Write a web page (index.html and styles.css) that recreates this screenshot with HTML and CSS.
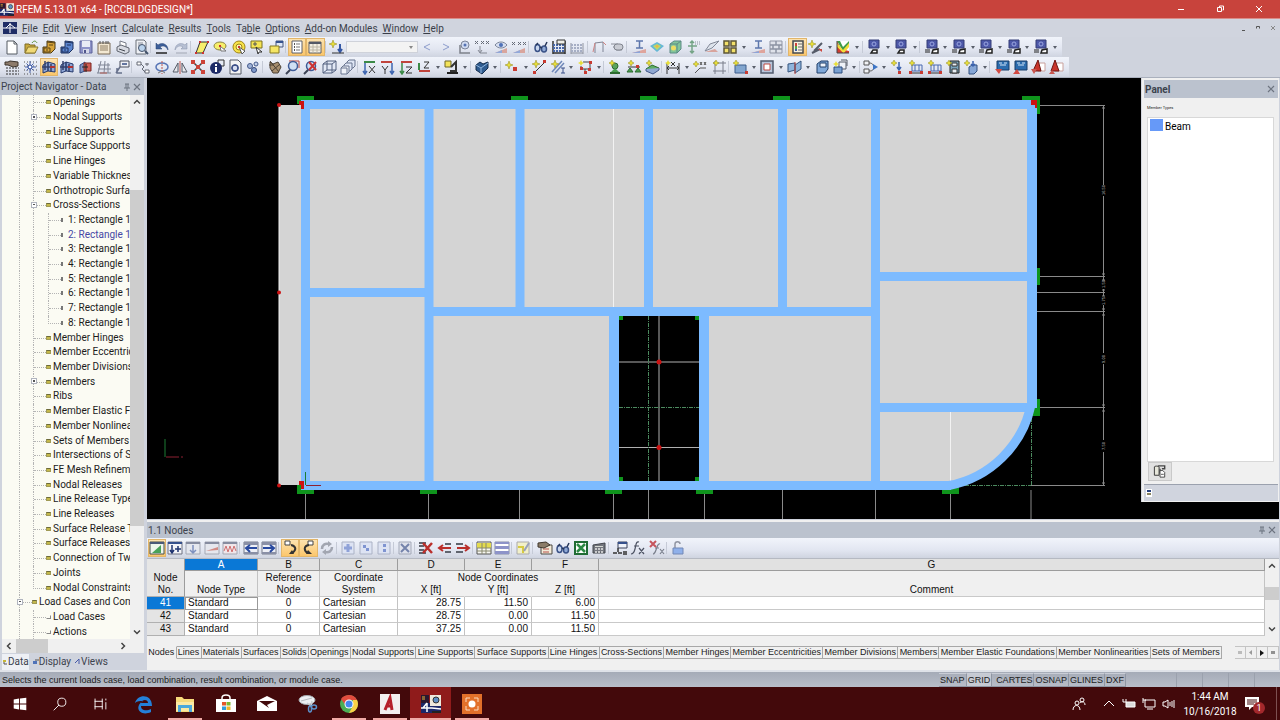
FILE: index.html
```html
<!DOCTYPE html>
<html lang="en">
<head>
    <meta charset="UTF-8">
    <meta name="viewport" content="width=device-width, initial-scale=1.0">
    <title>RFEM 5.13.01 x64 - [RCCBLDGDESIGN*]</title>
    <link rel="stylesheet" href="styles.css">
</head>
<body>
    <!-- icon sprite -->
    <svg class="sprite" aria-hidden="true">
        <defs>
            <symbol id="new" viewBox="0 0 16 16"><path d="M3 2h7l3 3v10H3z" fill="#fff" stroke="#555a63"/><path d="M10 2v3h3" fill="none" stroke="#555a63"/></symbol>
            <symbol id="open" viewBox="0 0 16 16"><path d="M2 5h4l1 1h5v8H2z" fill="#c9a93c" stroke="#7d6a24"/><path d="M2 14l3-6h10l-3 6z" fill="#f0d976" stroke="#8b7830"/><path d="M9 4c2-3 4-2 5 0" fill="none" stroke="#5b8f38"/></symbol>
            <symbol id="cab-y" viewBox="0 0 16 16"><path d="M6 2l8 1v7l-4 4H2V8h4z" fill="#d9a53a" stroke="#4b3a17"/><path d="M6 3l8 1M3 9h6v4H3zM5 11h2M8 6h4" fill="none" stroke="#5b4415"/></symbol>
            <symbol id="cab-b" viewBox="0 0 16 16"><path d="M6 2l8 1v7l-4 4H2V8h4z" fill="#5c86d0" stroke="#1d315f"/><path d="M6 3l8 1M3 9h6v4H3zM5 11h2M8 6h4" fill="none" stroke="#1d315f"/></symbol>
            <symbol id="save" viewBox="0 0 16 16"><path d="M2 2h12v12H2z" fill="#8e93c8" stroke="#5d629a"/><path d="M4 2h8v6H4z" fill="#e9ebf5"/><path d="M5 10h6v4H5z" fill="#d5d8e8"/><path d="M6 11h2v3H6z" fill="#50568c"/></symbol>
            <symbol id="report" viewBox="0 0 16 16"><path d="M2 4h12v11H2z" fill="#f3e8d2" stroke="#7a6a55"/><path d="M4 7h8M4 9h8M4 11h8" stroke="#8d7c63"/><path d="M4 2v3M7 2v3M10 2v3M12 2v3" stroke="#555"/></symbol>
            <symbol id="print" viewBox="0 0 16 16"><path d="M5 2l6 2v5H5z" fill="#fff" stroke="#777c88"/><path d="M2 8l4-2 8 3v4l-4 2-8-3z" fill="#d7dae2" stroke="#60656f"/><path d="M4 10l6 2" stroke="#3f434c"/></symbol>
            <symbol id="preview" viewBox="0 0 16 16"><path d="M3 1h8l2 2v12H3z" fill="#eef0f5" stroke="#6b7078"/><path d="M5 4h5M5 6h4M5 8h3" stroke="#8a8f9a"/><circle cx="9" cy="9" r="3.5" fill="#b9d2ec" stroke="#43526b"/><path d="M12 12l3 3" stroke="#43526b" stroke-width="2"/></symbol>
            <symbol id="undo" viewBox="0 0 16 16"><path d="M2 4v6h6L6 8c3-2 6-1 8 3 0-6-6-8-10-5z" fill="#3d5f9b" stroke="#27406f" stroke-width=".5"/><path d="M2 14h11" stroke="#222" stroke-width="1.5"/></symbol>
            <symbol id="redo" viewBox="0 0 16 16"><path d="M14 4v6H8l2-2c-3-2-6-1-8 3 0-6 6-8 10-5z" fill="#b7c0d4" stroke="#8690a8" stroke-width=".5"/><path d="M3 14h11" stroke="#a2a7b4"/></symbol>
            <symbol id="poly" viewBox="0 0 16 16"><path d="M2 14L6 3h8L9 14z" fill="#f7ee6a" stroke="#333"/><path d="M5 2h2v2H5zM13 2h2v2h-2zM1 13h2v2H1zM8 13h2v2H8z" fill="#c33"/></symbol>
            <symbol id="ell" viewBox="0 0 16 16"><ellipse cx="8" cy="7" rx="6" ry="4" fill="#f7ee6a" stroke="#888243"/><path d="M8 7l6 5H9z" fill="#fff" stroke="#777"/><path d="M7 6h2v2H7z" fill="#c33"/></symbol>
            <symbol id="circ" viewBox="0 0 16 16"><circle cx="8" cy="8" r="6" fill="#f7e34a" stroke="#a08414"/><circle cx="8" cy="8" r="3" fill="#fff7b0" stroke="#a08414"/><path d="M8 8l6 4-3 3z" fill="#fff" stroke="#555"/><path d="M7 7h2v2H7z" fill="#c33"/></symbol>
            <symbol id="note" viewBox="0 0 16 16"><path d="M2 2h11v7H2z" fill="#f5e454" stroke="#7a7023"/><path d="M4 5h4M6 3v4" stroke="#555"/><path d="M7 8l6 5-3 0-1 2z" fill="#fff" stroke="#333"/></symbol>
            <symbol id="copywin" viewBox="0 0 16 16"><path d="M8 2h7v6H8z" fill="#dfe8f7" stroke="#44557a"/><path d="M8 3h7" stroke="#36528f" stroke-width="2"/><path d="M2 7h9v7H2z" fill="#f5e665" stroke="#857924"/></symbol>
            <symbol id="list" viewBox="0 0 16 16"><path d="M3 2h10v12H3z" fill="#fff" stroke="#5d616b"/><path d="M5 5h1M5 8h1M5 11h1" stroke="#222" stroke-width="1.5"/><path d="M7 5h4M7 8h4M7 11h4" stroke="#777"/></symbol>
            <symbol id="grid" viewBox="0 0 16 16"><path d="M2 3h12v11H2z" fill="#f4efe2" stroke="#5d616b"/><path d="M2 3h12v2H2z" fill="#555a66"/><path d="M6 5v9M10 5v9M2 8h12M2 11h12" stroke="#bcb6a5"/></symbol>
            <symbol id="star-load" viewBox="0 0 16 16"><path d="M4 1l1 3 3 1-3 1-1 3-1-3-3-1 3-1z" fill="#e8df38" stroke="#908618" stroke-width=".5"/><path d="M11 5v7M9 10l2 3 2-3" fill="none" stroke="#3558a5" stroke-width="2"/><path d="M3 14h12" stroke="#333"/></symbol>
            <symbol id="lt" viewBox="0 0 16 16"><path d="M11 5L5 8l6 3" fill="none" stroke="#8d9dcc"/></symbol>
            <symbol id="gt" viewBox="0 0 16 16"><path d="M5 5l6 3-6 3" fill="none" stroke="#8d9dcc"/></symbol>
            <symbol id="eye-load" viewBox="0 0 16 16"><circle cx="9" cy="6" r="4" fill="#cfdaf0" stroke="#7c8599"/><circle cx="9" cy="6" r="1.5" fill="#5673b3"/><path d="M4 6v8h10" fill="none" stroke="#7d818b" stroke-width="1.5"/></symbol>
            <symbol id="val-load" viewBox="0 0 16 16"><path d="M1 2l3 3M4 2L1 5M7 2l3 3M10 2L7 5M12 2l3 3M15 2l-3 3" stroke="#666b77"/><path d="M6 7v6M4 11l2 3 2-3M6 14h7" fill="none" stroke="#858994"/></symbol>
            <symbol id="eye-res" viewBox="0 0 16 16"><path d="M2 6c3-4 9-4 12 0-3 4-9 4-12 0z" fill="#d6def0" stroke="#7c8599"/><circle cx="8" cy="6" r="2" fill="#4d71b8"/><path d="M2 14h12V9z" fill="#d9a59d"/><path d="M2 14h7v-3z" fill="#92a9da"/></symbol>
            <symbol id="val-res" viewBox="0 0 16 16"><path d="M1 3l3 3M4 3L1 6M7 3l3 3M10 3L7 6M12 3l3 3M15 3l-3 3" stroke="#666b77"/><path d="M2 14h12V9z" fill="#d9a59d"/><path d="M2 14h7v-3z" fill="#92a9da"/></symbol>
            <symbol id="glasses" viewBox="0 0 16 16"><ellipse cx="4.500" cy="9" rx="2.500" ry="3.500" fill="#c9d7ef" stroke="#3a5287" stroke-width="1.500"/><ellipse cx="11" cy="10" rx="2.500" ry="3" fill="#8fa9d6" stroke="#3a5287" stroke-width="1.500"/><path d="M7 8l2 1M12 7l2-4M3 6l2-2" stroke="#26365a" stroke-width="1.500"/></symbol>
            <symbol id="abacus" viewBox="0 0 16 16"><path d="M2 2v13M14 2v13M2 14h12" stroke="#333" stroke-width="1.500"/><path d="M2 6h12M2 9h12M2 12h12" stroke="#4767a8" stroke-width="2" stroke-dasharray="2 1"/><path d="M6 1h8v4H6z" fill="#f0efe8" stroke="#333"/></symbol>
            <symbol id="abacus-off" viewBox="0 0 16 16"><path d="M2 4v11M14 4v11M2 14h12" stroke="#9094a0"/><path d="M2 6h12M2 9h12M2 12h12" stroke="#a6aec4" stroke-width="2" stroke-dasharray="2 1"/></symbol>
            <symbol id="frame" viewBox="0 0 16 16"><path d="M4 14V4l8-1v10" fill="none" stroke="#7f8494"/><path d="M4 4L2 13M12 3l3 3" stroke="#d08585"/></symbol>
            <symbol id="mass" viewBox="0 0 16 16"><path d="M2 5h7M4 8h8M7 11h6" stroke="#8b8f99"/><rect x="5" y="5" width="9" height="6" rx="3" fill="#c9ccd4" stroke="#80848e"/></symbol>
            <symbol id="sec-i" viewBox="0 0 16 16"><path d="M5 2h7M8.500 2v7M5 9h7" stroke="#5e77ad" stroke-width="1.500"/><path d="M1 14h14v-4z" fill="#dfa49c"/><path d="M1 14h8v-2z" fill="#8ca5da"/></symbol>
            <symbol id="surf" viewBox="0 0 16 16"><path d="M1 7l7-4 7 4-7 6z" fill="#66b8d5"/><path d="M4 7l4-2 4 2-4 4z" fill="#b9dc69"/><path d="M6 7l2-1 2 1-2 2z" fill="#f0b04a"/></symbol>
            <symbol id="solid" viewBox="0 0 16 16"><path d="M3 5l4-3h7v8l-4 4H3z" fill="#82c59a" stroke="#5c8a86"/><path d="M3 5h7v9M10 5l4-3" fill="none" stroke="#5c8a86"/><circle cx="6.500" cy="9" r="2.500" fill="#eddc62"/></symbol>
            <symbol id="result-node" viewBox="0 0 16 16"><path d="M6 2v12M2 7h9M4 4l2-2 2 2M4 12l2 2 2-2" fill="none" stroke="#74a486" stroke-width="1.500"/><path d="M9 3h6M9 5h6" stroke="#8b91a0" stroke-dasharray="1 1"/></symbol>
            <symbol id="plane" viewBox="0 0 16 16"><path d="M1 12L6 5l9-3-7 7z" fill="#dde3ec" stroke="#838998"/><path d="M1 13h13l-3-3z" fill="#d8a49d"/></symbol>
            <symbol id="four" viewBox="0 0 16 16"><path d="M2 2h5v5H2zM9 2h5v5H9zM2 9h5v5H2zM9 9h5v5H9z" fill="#f3e069" stroke="#5d5636" stroke-width="1.500"/></symbol>
            <symbol id="grid-off" viewBox="0 0 16 16"><path d="M2 2h12v12H2z" fill="#dfe2ea" stroke="#9196a5"/><path d="M2 6h12M2 10h12M8 2v4M5 6v4M11 6v4M8 10v4" stroke="#8c92a3" stroke-width="1.500"/></symbol>
            <symbol id="panel" viewBox="0 0 16 16"><path d="M3 2h10v12H3z" fill="#f8f1de" stroke="#454a50" stroke-width="1.500"/><path d="M5 4h2v3H5z" fill="#cf4339"/><path d="M5 7h2v3H5z" fill="#58a646"/><path d="M5 10h2v2H5z" fill="#3c5fa6"/><path d="M8 5h4M8 8h4M8 11h4" stroke="#666"/></symbol>
            <symbol id="star-dots" viewBox="0 0 16 16"><path d="M4 1l1 3 3 1-3 1-1 3-1-3-3-1 3-1z" fill="#e8df38" stroke="#908618" stroke-width=".5"/><path d="M6 12l8-8M4 14l8-4" stroke="#555b68" stroke-width="2"/><path d="M10 10h4v3z" fill="#ca4a41"/></symbol>
            <symbol id="rainbow" viewBox="0 0 16 16"><path d="M2 2h12v12H2z" fill="#fff"/><path d="M2 2v12h12v-2L6 10z" fill="#d33c31"/><path d="M2 2h3l3 6 6-6v4l-6 6z" fill="#3f9c48"/><path d="M2 4l6 7 6-7v4l-5 6H8L2 8z" fill="#f2db3a"/><path d="M2 8l6 6H2z" fill="#d33c31"/><path d="M2 2v12h12" fill="none" stroke="#444"/></symbol>
            <symbol id="mon" viewBox="0 0 16 16"><path d="M3 1h10v8H3z" fill="#4d58a8" stroke="#353c77"/><circle cx="8" cy="5" r="2" fill="none" stroke="#9aa6e0"/><path d="M5 14h6v-3H7z" fill="#fff" stroke="#222" stroke-width="1.500"/></symbol>
            <symbol id="mon-arr" viewBox="0 0 16 16"><path d="M3 1h10v8H3z" fill="#4d58a8" stroke="#353c77"/><circle cx="8" cy="5" r="2" fill="none" stroke="#9aa6e0"/><path d="M1 11h5M1 13h5" stroke="#222"/><path d="M8 14h6v-4l-5 1z" fill="#fff" stroke="#222" stroke-width="1.500"/></symbol>
            <symbol id="hand-grid" viewBox="0 0 16 16"><path d="M2 9h13M2 12h13M2 15h13" stroke="#333" stroke-dasharray="2 1"/><path d="M1 3h3l2-1 8 1v4l-5 1-5-2H1z" fill="#8d7b6b" stroke="#3c342d"/></symbol>
            <symbol id="snap" viewBox="0 0 16 16"><path d="M2 3h13M2 7h13M2 11h13M2 15h13" stroke="#555" stroke-dasharray="1 2"/><path d="M8 2v12M3 8h11M4.500 4.500l7 7M11.500 4.500l-7 7" stroke="#4761a9"/><circle cx="8" cy="8" r="2" fill="#fff" stroke="#2848a0"/></symbol>
            <symbol id="wp" viewBox="0 0 16 16"><path d="M2 6l5-3v9l-5 2zM7 3l7 2v8l-7-1z" fill="#8fa6d6" stroke="#24386b"/><path d="M4 11V2M1 8h7M7 8h7M10 5v8" stroke="#33406b" stroke-width="1.500"/><path d="M9 8h5" stroke="#b03333" stroke-width="2"/></symbol>
            <symbol id="wp-red" viewBox="0 0 16 16"><path d="M3 6l5-3v9l-5 2z" fill="#8094c4" stroke="#344c83"/><path d="M7 4h7v8H7z" fill="#cf5c53" stroke="#7d2420"/><path d="M5 8h6M9 5v8" stroke="#222"/></symbol>
            <symbol id="axes-grid" viewBox="0 0 16 16"><path d="M5 2L2 14M9 2L8 14M12 4v10M2 6h12M2 10h13M1 14h14" fill="none" stroke="#7f8494"/><path d="M4 14h7" stroke="#b45d55"/></symbol>
            <symbol id="callout" viewBox="0 0 16 16"><path d="M6 2h9v6H6z" fill="#eef0f6" stroke="#4a4f5d"/><path d="M8 5h5" stroke="#344c83" stroke-width="1.500"/><path d="M6 8l-4 6M3 9v5h5" fill="none" stroke="#66708b" stroke-width="1.500"/></symbol>
            <symbol id="chain" viewBox="0 0 16 16"><path d="M2 3h4v3H2zM10 11h4v3h-4z" fill="#fff" stroke="#666b77"/><path d="M6 5l3 3-2 2 3 3M12 4v3M10 5h4" fill="none" stroke="#666b77"/></symbol>
            <symbol id="rotate" viewBox="0 0 16 16"><ellipse cx="8" cy="8" rx="6" ry="4" fill="none" stroke="#5674b5" stroke-width="1.500"/><path d="M8 2v13" stroke="#c2564d" stroke-dasharray="2 1"/><path d="M4 14l4-2 3 2" fill="none" stroke="#777"/></symbol>
            <symbol id="mirror" viewBox="0 0 16 16"><path d="M6 4v9H1zM10 4v9h5z" fill="#e7e9ee" stroke="#555a66"/><path d="M8 2v13" stroke="#c2564d"/></symbol>
            <symbol id="cross" viewBox="0 0 16 16"><path d="M3 3l10 10M13 3L3 13" stroke="#444" stroke-width="1.500"/><path d="M1 1h4v4H1zM11 1h4v4h-4zM1 11h4v4H1zM11 11h4v4h-4zM6 6h4v4H6z" fill="#cc4339"/></symbol>
            <symbol id="info" viewBox="0 0 16 16"><path d="M9 1h6v6H9z" fill="#e6ebf5" stroke="#333"/><circle cx="7" cy="9" r="6" fill="#1c2a66"/><path d="M7 5v2M7 8v5" stroke="#fff" stroke-width="2"/></symbol>
            <symbol id="gearbox" viewBox="0 0 16 16"><path d="M3 1h8l3 3v11H3z" fill="#f4f4f4" stroke="#555a66"/><circle cx="8" cy="9" r="3" fill="#d8dff0" stroke="#3b4f86" stroke-width="1.500"/><path d="M8 5v2M8 11v2M4 9h2M10 9h2" stroke="#3b4f86"/></symbol>
            <symbol id="nuts" viewBox="0 0 16 16"><circle cx="5" cy="7" r="2.500" fill="#9fb3d8" stroke="#44598b"/><circle cx="11" cy="5" r="2" fill="#c1cfe9" stroke="#44598b"/><circle cx="9" cy="11" r="2.500" fill="#7f99cb" stroke="#344878"/></symbol>
            <symbol id="grab" viewBox="0 0 16 16"><path d="M3 3l3 2 5-2 3 5-3 6H6L3 9z" fill="#a78e6e" stroke="#4b4034"/><path d="M2 6h5M3 2l9 11M5 12l8-7" stroke="#4b4034"/></symbol>
            <symbol id="zoomin" viewBox="0 0 16 16"><path d="M4 2h10v7" fill="none" stroke="#b6453e"/><circle cx="8" cy="7" r="4.500" fill="#cfe0f5" stroke="#3f5b96" stroke-width="1.500"/><path d="M5 11l-4 4" stroke="#3c4254" stroke-width="2"/></symbol>
            <symbol id="zoomx" viewBox="0 0 16 16"><circle cx="8" cy="7" r="4.500" fill="#cfe0f5" stroke="#3f5b96" stroke-width="1.500"/><path d="M5 11l-4 4" stroke="#3c4254" stroke-width="2"/><path d="M6 3l7 8M13 3l-7 8" stroke="#c33" stroke-width="2"/></symbol>
            <symbol id="cube" viewBox="0 0 16 16"><path d="M2 5l4-3h9v9l-4 3H2z" fill="#e2e8f5" stroke="#53607f"/><path d="M2 5h9v9M11 5l4-3M6 2v9h9M6 11l-4 3" fill="none" stroke="#53607f"/></symbol>
            <symbol id="cubes" viewBox="0 0 16 16"><path d="M7 3l2-2h6v6l-2 2H7z" fill="#dfe6f5" stroke="#69748f"/><path d="M4 6l2-2h6v6l-2 2H4z" fill="#dfe6f5" stroke="#69748f"/><path d="M1 9l2-2h6v6l-2 2H1zM1 9h6v6" fill="#eef1f8" stroke="#69748f"/></symbol>
            <symbol id="ax-x" viewBox="0 0 16 16"><path d="M4 15V4M2 12l2 3 2-3" fill="none" stroke="#3f66b0" stroke-width="1.500"/><path d="M3 3h11" stroke="#3c8a47" stroke-width="2"/><path d="M8 7l6 7M14 7l-6 7" stroke="#333"/></symbol>
            <symbol id="ax-y" viewBox="0 0 16 16"><path d="M13 15V4M11 12l2 3 2-3" fill="none" stroke="#3f66b0" stroke-width="1.500"/><path d="M2 3h11" stroke="#c0443c" stroke-width="2"/><path d="M3 7l3 4 3-4M6 11v4" fill="none" stroke="#333"/></symbol>
            <symbol id="ax-z" viewBox="0 0 16 16"><path d="M4 15V4M2 12l2 3 2-3" fill="none" stroke="#3c8a47" stroke-width="1.500"/><path d="M3 3h11" stroke="#c0443c" stroke-width="2"/><path d="M8 8h6l-6 6h6" fill="none" stroke="#333"/></symbol>
            <symbol id="ax-iso" viewBox="0 0 16 16"><path d="M3 11V4" stroke="#3c8a47" stroke-width="2"/><path d="M3 12h11" stroke="#c0443c" stroke-width="2"/><path d="M8 3h5L8 9h5" fill="none" stroke="#333"/></symbol>
            <symbol id="drill" viewBox="0 0 16 16"><path d="M2 2h6v6H2z" fill="#f3e35a" stroke="#6e6727"/><path d="M8 8l5-5v9H7" fill="none" stroke="#333" stroke-width="2"/><path d="M4 14h11" stroke="#222" stroke-width="2"/></symbol>
            <symbol id="block" viewBox="0 0 16 16"><path d="M2 6l4-3 3 2 5-2v6l-6 6-6-4z" fill="#2f5b8f" stroke="#142c4b"/><path d="M2 6l5 3v5M7 9l7-5" fill="none" stroke="#8db3dc"/></symbol>
            <symbol id="st-node" viewBox="0 0 16 16"><path d="M5 2l1 3 3 1-3 1-1 3-1-3-3-1 3-1z" fill="#e8df38" stroke="#908618" stroke-width=".5"/><path d="M9 8h4v4H9z" fill="#c93b32"/></symbol>
            <symbol id="st-line" viewBox="0 0 16 16"><path d="M3 14L14 3" stroke="#333"/><path d="M12 1h3v3h-3zM2 12h3v3H2z" fill="#c93b32"/><path d="M5 1l1 3 3 1-3 1-1 3-1-3-3-1 3-1z" fill="#e8df38" stroke="#908618" stroke-width=".5"/></symbol>
            <symbol id="st-mem" viewBox="0 0 16 16"><path d="M2 13L12 2M5 14L14 4" stroke="#6e87b9" stroke-width="1.500"/><path d="M11 9h4M13 9v5M11 14h4" stroke="#3b508a"/><path d="M5 1l1 3 3 1-3 1-1 3-1-3-3-1 3-1z" fill="#e8df38" stroke="#908618" stroke-width=".5"/></symbol>
            <symbol id="st-set" viewBox="0 0 16 16"><path d="M6 3h7v7H4v-3M8 10v4" fill="none" stroke="#444"/><path d="M12 2h3v3h-3zM11 9h3v3h-3zM7 12h3v3H7zM3 8h3v3H3z" fill="#c93b32"/><path d="M4 1l1 2 2 1-2 1-1 2-1-2-2-1 2-1z" fill="#e8df38"/></symbol>
            <symbol id="st-sup" viewBox="0 0 16 16"><circle cx="8" cy="7" r="3" fill="#5aa25b" stroke="#2d6a30"/><path d="M8 9l4 4H4z" fill="#4b9e51"/><path d="M3 14h10" stroke="#2d6a30" stroke-width="2"/><path d="M5 1l1 2 2 1-2 1-1 2-1-2-2-1 2-1z" fill="#e8df38" stroke="#908618" stroke-width=".5"/></symbol>
            <symbol id="st-lsup" viewBox="0 0 16 16"><path d="M2 8h12" stroke="#333"/><path d="M4 9l3 4H1zM12 9l3 4H9z" fill="#4b9e51" stroke="#2d6a30"/><path d="M10 6h3v3h-3z" fill="#c93b32"/><path d="M5 1l1 2 2 1-2 1-1 2-1-2-2-1 2-1z" fill="#e8df38" stroke="#908618" stroke-width=".5"/></symbol>
            <symbol id="st-ssup" viewBox="0 0 16 16"><path d="M2 10l6-4 7 3-6 5z" fill="#5cae64" stroke="#2d6a30"/><path d="M2 10v2l7 3 6-4V9" fill="#8fa7d1" stroke="#44598b"/><path d="M5 1l1 2 2 1-2 1-1 2-1-2-2-1 2-1z" fill="#e8df38" stroke="#908618" stroke-width=".5"/></symbol>
            <symbol id="dim" viewBox="0 0 16 16"><path d="M2 4v11M14 4v11M2 9h12M4 7L2 9l2 2M12 7l2 2-2 2M6 3l4 4M10 3L6 7" fill="none" stroke="#333"/><path d="M3 1l1 2 2 1-2 1-1 2-1-2-2-1 2-1z" fill="#e8df38"/></symbol>
            <symbol id="comment" viewBox="0 0 16 16"><path d="M3 14l5-5h6M8 3l2 3M10 3L8 6M12 3l2 3M14 3l-2 3" fill="none" stroke="#555"/><path d="M4 2l1 2 2 1-2 1-1 2-1-2-2-1 2-1z" fill="#e8df38" stroke="#908618" stroke-width=".5"/></symbol>
            <symbol id="hash" viewBox="0 0 16 16"><path d="M4 2v13M12 2v13M2 4h13M2 12h13" stroke="#787d8a"/><path d="M5 1l1 2 2 1-2 1-1 2-1-2-2-1 2-1z" fill="#e8df38" stroke="#908618" stroke-width=".5"/></symbol>
            <symbol id="st-surf" viewBox="0 0 16 16"><path d="M3 6h11v8H3z" fill="#83a6cf" stroke="#3c5d8b"/><path d="M13 12h3v3h-3z" fill="#c93b32"/><path d="M4 1l1 2 2 1-2 1-1 2-1-2-2-1 2-1z" fill="#e8df38" stroke="#908618" stroke-width=".5"/></symbol>
            <symbol id="opening" viewBox="0 0 16 16"><path d="M2 2h12v12H2z" fill="#b7c4da" stroke="#50596e" stroke-width="1.500"/><path d="M5 5h6v6H5z" fill="#fff" stroke="#c04c44"/></symbol>
            <symbol id="inter" viewBox="0 0 16 16"><path d="M1 5l7-1v7l-7 2zM8 6l6-4v8l-6 4z" fill="#8fb4dc" stroke="#35547e"/><path d="M8 3v12" stroke="#c34840"/></symbol>
            <symbol id="st-solid" viewBox="0 0 16 16"><path d="M3 5l4-3h7v8l-3 4H3z" fill="#7ea7d8" stroke="#213e68"/><path d="M6 4h6v4H6z" fill="#eef3fa" stroke="#213e68"/></symbol>
            <symbol id="st-extr" viewBox="0 0 16 16"><path d="M7 3h7v7H7zM9 1h6v6" fill="#eff2f8" stroke="#555a66"/><path d="M2 8h8v6H2z" fill="#79a0d1" stroke="#2d4d7e"/><path d="M4 2l1 2 2 1-2 1-1 2-1-2-2-1 2-1z" fill="#e8df38"/></symbol>
            <symbol id="branch" viewBox="0 0 16 16"><path d="M1 2h5v4H1zM1 10h5v4H1z" fill="#f1f2f5" stroke="#555"/><path d="M6 4c4 0 4 2 5 4-1 3-1 4-5 4" fill="none" stroke="#555"/><path d="M10 5l5 3-5 3z" fill="#3d74c4"/></symbol>
            <symbol id="ld-node" viewBox="0 0 16 16"><path d="M9 3v7M7 8l2 3 2-3" fill="none" stroke="#3b62ae" stroke-width="1.500"/><path d="M8 12h3v3H8z" fill="#c93b32"/><path d="M4 1l1 2 2 1-2 1-1 2-1-2-2-1 2-1z" fill="#e8df38" stroke="#908618" stroke-width=".5"/></symbol>
            <symbol id="ld-mem" viewBox="0 0 16 16"><path d="M2 14h12" stroke="#333"/><path d="M4 6h10v6H4zM7 6v6M11 6v6" fill="none" stroke="#4868b0"/><path d="M1 12h3v3H1zM12 12h3v3h-3z" fill="#c93b32"/><path d="M4 1l1 2 2 1-2 1-1 2-1-2-2-1 2-1z" fill="#e8df38" stroke="#908618" stroke-width=".5"/></symbol>
            <symbol id="ld-gen" viewBox="0 0 16 16"><path d="M5 2h9v12H5z" fill="#79a3bb" stroke="#222"/><path d="M7 4h5v3H7zM7 10h5v4H7z" fill="#e6edf2" stroke="#333"/><path d="M4 1l1 2 2 1-2 1-1 2-1-2-2-1 2-1z" fill="#e8df38" stroke="#908618" stroke-width=".5"/></symbol>
            <symbol id="ld-solid" viewBox="0 0 16 16"><path d="M6 8l3-2h5v6l-3 3H6z" fill="#86a6d6" stroke="#32507f"/><path d="M10 2v5M8 5l2 2 2-2" fill="none" stroke="#3b62ae" stroke-width="1.500"/><path d="M4 1l1 2 2 1-2 1-1 2-1-2-2-1 2-1z" fill="#e8df38" stroke="#908618" stroke-width=".5"/></symbol>
            <symbol id="dl-down" viewBox="0 0 16 16"><path d="M3 2h12v9H3z" fill="#2b6cae" stroke="#173d68"/><path d="M5 4h3M10 4h3M6 6h6" stroke="#d3e6f8"/><path d="M1 10h7l-3 5z" fill="#d34b42"/></symbol>
            <symbol id="dl-up" viewBox="0 0 16 16"><path d="M3 2h12v9H3z" fill="#2b6cae" stroke="#173d68"/><path d="M5 4h3M10 4h3M6 6h6" stroke="#d3e6f8"/><path d="M1 15h7l-3-5z" fill="#d34b42"/></symbol>
            <symbol id="cad" viewBox="0 0 16 16"><path d="M8 4h7v8H8z" fill="#fff" stroke="#c9a19c"/><path d="M8 1l3 11H3z" fill="#c9352c" stroke="#6d1511"/><path d="M1 10h6l-3 5z" fill="#c9564e"/></symbol>
            <symbol id="cad-up" viewBox="0 0 16 16"><path d="M7 4h8v8H7z" fill="#fff" stroke="#c9a19c"/><path d="M7 1l4 11H3z" fill="#c9352c" stroke="#6d1511"/><path d="M1 15l3-4 3 4z" fill="#c9564e"/></symbol>
            <!-- table toolbar -->
            <symbol id="t-check" viewBox="0 0 16 16"><path d="M1 2h14v12H1z" fill="#eef6ec" stroke="#47504e"/><path d="M1 2h14v2H1z" fill="#4a5a78"/><path d="M3 13L12 5v8z" fill="#49a35a"/></symbol>
            <symbol id="t-plus" viewBox="0 0 16 16"><path d="M1 2h14v12H1z" fill="#f3f4f8" stroke="#6c7180"/><path d="M1 2h14v2H1z" fill="#35508c"/><path d="M5 5v8M3 10l2 3 2-3M11 6v6M8 9h6" fill="none" stroke="#1f3470" stroke-width="1.500"/></symbol>
            <symbol id="t-down" viewBox="0 0 16 16"><path d="M1 2h14v12H1z" fill="#e5e7ee" stroke="#a3a7b3"/><path d="M1 2h14v2H1z" fill="#868ca0"/><path d="M8 5v7M5 10l3 3 3-3" fill="none" stroke="#7d90be" stroke-width="1.500"/></symbol>
            <symbol id="t-res" viewBox="0 0 16 16"><path d="M1 2h14v12H1z" fill="#e5e7ee" stroke="#a3a7b3"/><path d="M1 2h14v2H1z" fill="#868ca0"/><path d="M2 11l12-4v3z" fill="#d18c86"/></symbol>
            <symbol id="t-wave" viewBox="0 0 16 16"><path d="M1 2h14v12H1z" fill="#f0e6ea" stroke="#a3a7b3"/><path d="M1 2h14v2H1z" fill="#868ca0"/><path d="M2 11l2-5 2 6 2-6 2 6 2-6 2 5" fill="none" stroke="#cf6f70"/></symbol>
            <symbol id="t-left" viewBox="0 0 16 16"><path d="M1 2h14v12H1z" fill="#eef0f6" stroke="#777c8b"/><path d="M1 2h14v3H1zM1 12h14v2H1z" fill="#8a90a6"/><path d="M14 8H4M7 5L3 8l4 4" fill="none" stroke="#294aa0" stroke-width="2"/></symbol>
            <symbol id="t-right" viewBox="0 0 16 16"><path d="M1 2h14v12H1z" fill="#eef0f6" stroke="#777c8b"/><path d="M1 2h14v3H1zM1 12h14v2H1z" fill="#8a90a6"/><path d="M2 8h10M9 5l4 3-4 4" fill="none" stroke="#294aa0" stroke-width="2"/></symbol>
            <symbol id="t-hook" viewBox="0 0 16 16"><path d="M3 1h5v4H3z" fill="#fff" stroke="#444"/><path d="M9 5c5 1 6 5 1 8" fill="none" stroke="#333" stroke-width="2"/><path d="M12 14l-5 0 3-4z" fill="#333"/></symbol>
            <symbol id="t-hook2" viewBox="0 0 16 16"><path d="M8 1h5v4H8z" fill="#fff" stroke="#444"/><path d="M9 5c-6 1-5 6-1 8" fill="none" stroke="#333" stroke-width="2"/><path d="M6 14l6 0-4-4z" fill="#333"/></symbol>
            <symbol id="t-sync" viewBox="0 0 16 16"><path d="M3 9c0-4 3-6 7-5M13 7c0 4-3 6-7 5" fill="none" stroke="#a2a6b1" stroke-width="2.500"/><path d="M9 1l4 3-4 3zM7 15l-4-3 4-3z" fill="#a2a6b1"/></symbol>
            <symbol id="t-blue" viewBox="0 0 16 16"><path d="M2 2h12v12H2z" fill="#dde3f3" stroke="#abb2c5"/><path d="M4 8h8M8 4v8" stroke="#8fa2d8" stroke-width="3"/></symbol>
            <symbol id="t-blue2" viewBox="0 0 16 16"><path d="M2 2h12v12H2z" fill="#dde3f3" stroke="#abb2c5"/><path d="M5 5h3v3H5zM8 8h3v3H8z" fill="#7f94d1"/></symbol>
            <symbol id="t-blue3" viewBox="0 0 16 16"><path d="M2 2h12v12H2z" fill="#dde3f3" stroke="#abb2c5"/><path d="M7 4h3v3H7zM7 9h3v3H7z" fill="#7f94d1"/></symbol>
            <symbol id="t-x" viewBox="0 0 16 16"><path d="M2 2h12v12H2z" fill="#dfe2ec" stroke="#a3a9b8"/><path d="M4 4l8 8M12 4l-8 8" stroke="#7483ab" stroke-width="2"/></symbol>
            <symbol id="t-delrow" viewBox="0 0 16 16"><path d="M1 3h7M1 6h5M1 10h5M1 13h7" stroke="#60646e" stroke-width="2"/><path d="M5 3l9 10M14 3L5 13" stroke="#ba2f2c" stroke-width="2.500"/></symbol>
            <symbol id="t-insrow" viewBox="0 0 16 16"><path d="M8 4h6M8 12h6" stroke="#60646e" stroke-width="2"/><path d="M14 8H3M6 5L2 8l4 3" fill="none" stroke="#ba2f2c" stroke-width="2"/></symbol>
            <symbol id="t-outrow" viewBox="0 0 16 16"><path d="M1 4h7M1 12h7" stroke="#60646e" stroke-width="2"/><path d="M2 8h11M10 5l4 3-4 3" fill="none" stroke="#ba2f2c" stroke-width="2"/></symbol>
            <symbol id="t-yellow" viewBox="0 0 16 16"><path d="M1 2h14v12H1z" fill="#f8f8f2" stroke="#555"/><path d="M1 3h14v5H1z" fill="#e3db4e"/><path d="M6 3v11M10 3v11M1 8h14M1 11h14" stroke="#87886f"/></symbol>
            <symbol id="t-bands" viewBox="0 0 16 16"><path d="M1 2h14v12H1z" fill="#fff" stroke="#8a90a4"/><path d="M1 2h14v2H1zM1 6h14v3H1zM1 11h14v3H1z" fill="#8d93c9"/></symbol>
            <symbol id="t-edit" viewBox="0 0 16 16"><path d="M2 2h12v12H2z" fill="#f2f0c9" stroke="#aaa"/><path d="M3 7h5v6" fill="none" stroke="#d7ca41" stroke-width="2"/><path d="M9 11l5-8" stroke="#9aa1b8" stroke-width="2"/></symbol>
            <symbol id="t-prop" viewBox="0 0 16 16"><path d="M4 5h11v9H4z" fill="#f2ead8" stroke="#4d4a44"/><path d="M6 9h6M6 12h6" stroke="#b65049"/><path d="M1 3l8-1 4 3-6 3-6-1z" fill="#8b7c69" stroke="#40382e"/></symbol>
            <symbol id="t-xls" viewBox="0 0 16 16"><path d="M2 2h12v12H2z" fill="#fff" stroke="#1f6b34" stroke-width="2"/><path d="M4 4l8 8M12 4l-8 8" stroke="#2b8a44" stroke-width="2.500"/></symbol>
            <symbol id="t-calc" viewBox="0 0 16 16"><path d="M2 5l12-2v10H2z" fill="#73767e" stroke="#43464d"/><path d="M4 6h8v1H4z" fill="#d6dad4"/><path d="M4 9h8M4 12h8" stroke="#e8e8e8" stroke-width="1.500" stroke-dasharray="2 1"/></symbol>
            <symbol id="t-abl" viewBox="0 0 16 16"><path d="M6 2h9v6H6z" fill="#eef2fa" stroke="#39405a"/><path d="M6 2h9v2H6z" fill="#35508c"/><path d="M6 8v4M1 13h4M6 13h4M11 12h4M11 14h4" stroke="#333" stroke-width="1.500"/></symbol>
            <symbol id="t-fx" viewBox="0 0 16 16"><path d="M9 2c-3-1-3 3-4 7s-2 5-4 5M4 6h5M9 8l5 6M14 8l-5 6" fill="none" stroke="#4c5262" stroke-width="1.200"/></symbol>
            <symbol id="t-xfx" viewBox="0 0 16 16"><path d="M11 4c-2-1-3 3-4 6s-2 4-3 4M6 8h4M11 9l4 5M15 9l-4 5" fill="none" stroke="#7a7f8c" stroke-width="1.200"/><path d="M1 1l6 6M7 1L1 7" stroke="#c6555d" stroke-width="2"/></symbol>
            <symbol id="t-lock" viewBox="0 0 16 16"><path d="M5 8V4c0-3 5-3 5 0" fill="none" stroke="#9195a2" stroke-width="1.500"/><path d="M3 8h10v6H3z" fill="#8fb0ea" stroke="#7388b5"/></symbol>
            <!-- small parts -->
            <symbol id="pin" viewBox="0 0 8 8"><path d="M2 1h4M3 1v4M5 1v4M1 5h6M4 5v3" fill="none" stroke="#6d7480"/></symbol>
            <symbol id="x" viewBox="0 0 8 8"><path d="M1 1l6 6M7 1L1 7" stroke="#6d7480" stroke-width="1.200"/></symbol>
            <symbol id="up" viewBox="0 0 8 8"><path d="M1 5.500l3-3 3 3" fill="none" stroke="#444" stroke-width="1.500"/></symbol>
            <symbol id="down" viewBox="0 0 8 8"><path d="M1 2.500l3 3 3-3" fill="none" stroke="#444" stroke-width="1.500"/></symbol>
            <symbol id="left" viewBox="0 0 8 8"><path d="M5.500 1l-3 3 3 3" fill="none" stroke="#444" stroke-width="1.500"/></symbol>
            <symbol id="right" viewBox="0 0 8 8"><path d="M2.500 1l3 3-3 3" fill="none" stroke="#444" stroke-width="1.500"/></symbol>
            <symbol id="rfem" viewBox="0 0 20 18"><path d="M0 8h20v10H0z" fill="#1b2768"/><path d="M0 0h8v8H0z" fill="#2a1830"/><path d="M9 0h11v11H9z" fill="#efe9dc"/><circle cx="15" cy="5" r="3" fill="#5e8ec4" stroke="#333"/><path d="M1 2h3M1 4h3" stroke="#e8b33b"/><path d="M0 13h11l9 1M6 8v9M6 8L2 13" fill="none" stroke="#fff" stroke-width="1.500"/><path d="M11 16h9v2h-9z" fill="#222"/></symbol>
        </defs>
    </svg>

    <div class="app">
        <header class="titlebar">
            <svg class="app-icon"><use href="#rfem"/></svg>
            <h1>RFEM 5.13.01 x64 - [RCCBLDGDESIGN*]</h1>
            <div class="win-buttons">
                <button title="Minimize"><svg viewBox="0 0 8 8"><path d="M1 4.500h6" stroke="#fff"/></svg></button>
                <button title="Restore"><svg viewBox="0 0 8 8"><path d="M1.500 2.500h4v4h-4zM3.500 2V1h4v4h-1" fill="none" stroke="#fff"/></svg></button>
                <button title="Close"><svg viewBox="0 0 8 8"><path d="M1 1l6 6M7 1L1 7" stroke="#fff"/></svg></button>
            </div>
        </header>

        <nav class="menubar">
            <svg class="menu-icon" viewBox="0 0 14 12"><path d="M0 0h14v12H0z" fill="#1f2d66"/><path d="M0 6h14M7 1v10M7 2l5 4M7 2L3 6" fill="none" stroke="#fff"/></svg>
            <button><u>F</u>ile</button>
            <button><u>E</u>dit</button>
            <button><u>V</u>iew</button>
            <button><u>I</u>nsert</button>
            <button><u>C</u>alculate</button>
            <button><u>R</u>esults</button>
            <button><u>T</u>ools</button>
            <button>Ta<u>b</u>le</button>
            <button><u>O</u>ptions</button>
            <button><u>A</u>dd-on Modules</button>
            <button><u>W</u>indow</button>
            <button><u>H</u>elp</button>
            <div class="mdi-buttons">
                <svg viewBox="0 0 8 8"><path d="M3 6.500h3" stroke="#555"/></svg>
                <svg viewBox="0 0 8 8"><path d="M2.500 4.500v-2h3v2" fill="none" stroke="#555"/></svg>
                <svg viewBox="0 0 8 8"><path d="M2 2l4 4M6 2L2 6" stroke="#888"/></svg>
            </div>
        </nav>

        <div class="toolbar toolbar-main">
            <button class="tool" title="New"><svg><use href="#new"/></svg></button>
            <button class="tool" title="Open"><svg><use href="#open"/></svg></button>
            <button class="tool" title="Block manager"><svg><use href="#cab-y"/></svg></button>
            <button class="tool" title="Project manager"><svg><use href="#cab-b"/></svg></button>
            <button class="tool" title="Save"><svg><use href="#save"/></svg></button>
            <button class="tool" title="Printout report"><svg><use href="#report"/></svg></button>
            <button class="tool" title="Print"><svg><use href="#print"/></svg></button>
            <button class="tool" title="Preview"><svg><use href="#preview"/></svg></button>
            <span class="sep"></span>
            <button class="tool" title="Undo"><svg><use href="#undo"/></svg></button>
            <button class="tool" title="Redo"><svg><use href="#redo"/></svg></button>
            <span class="sep"></span>
            <button class="tool" title="Select polygon"><svg><use href="#poly"/></svg></button>
            <button class="tool" title="Select ellipse"><svg><use href="#ell"/></svg></button>
            <button class="tool" title="Select annulus"><svg><use href="#circ"/></svg></button>
            <button class="tool" title="Select special"><svg><use href="#note"/></svg></button>
            <button class="tool" title="Copy window"><svg><use href="#copywin"/></svg></button>
            <span class="sep"></span>
            <button class="tool on" title="Navigator"><svg><use href="#list"/></svg></button>
            <button class="tool on" title="Tables"><svg><use href="#grid"/></svg></button>
            <span class="sep"></span>
            <button class="tool" title="New load case"><svg><use href="#star-load"/></svg></button>
            <span class="combo"><select aria-label="Load case"><option></option></select></span>
            <button class="tool" title="Previous"><svg><use href="#lt"/></svg></button>
            <button class="tool" title="Next"><svg><use href="#gt"/></svg></button>
            <button class="tool" title="Show loads"><svg><use href="#eye-load"/></svg></button>
            <button class="tool" title="Load values"><svg><use href="#val-load"/></svg></button>
            <button class="tool" title="Show results"><svg><use href="#eye-res"/></svg></button>
            <button class="tool" title="Result values"><svg><use href="#val-res"/></svg></button>
            <span class="sep"></span>
            <button class="tool" title="Plausibility check"><svg><use href="#glasses"/></svg></button>
            <button class="tool" title="Calculate all"><svg><use href="#abacus"/></svg></button>
            <button class="tool" title="To calculate"><svg><use href="#abacus-off"/></svg></button>
            <span class="sep"></span>
            <button class="tool" title="Deformation"><svg><use href="#frame"/></svg></button>
            <button class="tool" title="Animation"><svg><use href="#mass"/></svg></button>
            <span class="sep"></span>
            <button class="tool" title="Members results"><svg><use href="#sec-i"/></svg></button>
            <button class="tool" title="Surface results"><svg><use href="#surf"/></svg></button>
            <button class="tool" title="Solid results"><svg><use href="#solid"/></svg></button>
            <button class="tool" title="Support reactions"><svg><use href="#result-node"/></svg></button>
            <button class="tool" title="Sections"><svg><use href="#plane"/></svg></button>
            <button class="tool" title="Windows"><svg><use href="#four"/></svg></button>
            <button class="drop" title="More"></button>
            <button class="tool" title="Result diagrams"><svg><use href="#sec-i"/></svg></button>
            <button class="tool" title="FE mesh"><svg><use href="#grid-off"/></svg></button>
            <span class="sep"></span>
            <button class="tool on" title="Control panel"><svg><use href="#panel"/></svg></button>
            <button class="tool" title="Visibility"><svg><use href="#star-dots"/></svg></button>
            <button class="drop" title="More"></button>
            <button class="tool" title="Isobands"><svg><use href="#rainbow"/></svg></button>
            <button class="drop" title="More"></button>
            <span class="sep"></span>
            <button class="tool" title="View 1"><svg><use href="#mon"/></svg></button>
            <button class="drop" title="More"></button>
            <button class="tool" title="View 2"><svg><use href="#mon"/></svg></button>
            <button class="drop" title="More"></button>
            <span class="sep"></span>
            <button class="tool" title="View 3"><svg><use href="#mon-arr"/></svg></button>
            <button class="drop" title="More"></button>
            <button class="tool" title="View 4"><svg><use href="#mon-arr"/></svg></button>
            <button class="drop" title="More"></button>
            <button class="tool" title="View 5"><svg><use href="#mon-arr"/></svg></button>
            <button class="drop" title="More"></button>
            <button class="tool" title="View 6"><svg><use href="#mon-arr"/></svg></button>
            <button class="drop" title="More"></button>
            <button class="tool" title="View 7"><svg><use href="#mon-arr"/></svg></button>
            <button class="drop" title="More"></button>
        </div>

        <div class="toolbar toolbar-edit">
            <button class="tool" title="Work plane"><svg><use href="#hand-grid"/></svg></button>
            <button class="tool" title="Snap"><svg><use href="#snap"/></svg></button>
            <button class="tool on" title="Plane XY"><svg><use href="#wp"/></svg></button>
            <button class="tool" title="Plane YZ"><svg><use href="#wp"/></svg></button>
            <button class="tool" title="Plane XZ"><svg><use href="#wp-red"/></svg></button>
            <button class="tool" title="Grid"><svg><use href="#axes-grid"/></svg></button>
            <button class="tool" title="Callout"><svg><use href="#callout"/></svg></button>
            <span class="sep"></span>
            <button class="tool" title="Move or copy"><svg><use href="#chain"/></svg></button>
            <button class="tool" title="Rotate"><svg><use href="#rotate"/></svg></button>
            <button class="tool" title="Mirror"><svg><use href="#mirror"/></svg></button>
            <button class="tool" title="Connect"><svg><use href="#cross"/></svg></button>
            <button class="tool" title="Info"><svg><use href="#info"/></svg></button>
            <button class="tool" title="Display properties"><svg><use href="#gearbox"/></svg></button>
            <button class="tool" title="Settings"><svg><use href="#nuts"/></svg></button>
            <span class="sep"></span>
            <button class="tool" title="Move view"><svg><use href="#grab"/></svg></button>
            <button class="tool" title="Zoom"><svg><use href="#zoomin"/></svg></button>
            <button class="tool" title="Show all"><svg><use href="#zoomx"/></svg></button>
            <button class="tool" title="Isometric"><svg><use href="#cube"/></svg></button>
            <button class="tool" title="Previous view"><svg><use href="#cubes"/></svg></button>
            <span class="sep"></span>
            <button class="tool" title="View in X"><svg><use href="#ax-x"/></svg></button>
            <button class="tool" title="View in Y"><svg><use href="#ax-y"/></svg></button>
            <button class="tool" title="View in Z"><svg><use href="#ax-z"/></svg></button>
            <button class="tool" title="View in -Z"><svg><use href="#ax-iso"/></svg></button>
            <button class="drop" title="More"></button>
            <button class="tool" title="Edit"><svg><use href="#drill"/></svg></button>
            <button class="drop" title="More"></button>
            <span class="sep"></span>
            <button class="tool" title="Rendering"><svg><use href="#block"/></svg></button>
            <button class="drop" title="More"></button>
            <span class="sep"></span>
            <button class="tool" title="New node"><svg><use href="#st-node"/></svg></button>
            <button class="drop" title="More"></button>
            <button class="tool" title="New line"><svg><use href="#st-line"/></svg></button>
            <button class="tool" title="New member"><svg><use href="#st-mem"/></svg></button>
            <button class="drop" title="More"></button>
            <button class="tool" title="New set"><svg><use href="#st-set"/></svg></button>
            <button class="drop" title="More"></button>
            <span class="sep"></span>
            <button class="tool" title="Nodal support"><svg><use href="#st-sup"/></svg></button>
            <button class="tool" title="Line support"><svg><use href="#st-lsup"/></svg></button>
            <button class="tool" title="Surface support"><svg><use href="#st-ssup"/></svg></button>
            <span class="sep"></span>
            <button class="tool" title="Dimension"><svg><use href="#dim"/></svg></button>
            <button class="drop" title="More"></button>
            <button class="tool" title="Comment"><svg><use href="#comment"/></svg></button>
            <button class="tool" title="Guidelines"><svg><use href="#hash"/></svg></button>
            <span class="sep"></span>
            <button class="tool" title="New surface"><svg><use href="#st-surf"/></svg></button>
            <button class="drop" title="More"></button>
            <button class="tool" title="New opening"><svg><use href="#opening"/></svg></button>
            <button class="drop" title="More"></button>
            <button class="tool" title="Intersection"><svg><use href="#inter"/></svg></button>
            <button class="drop" title="More"></button>
            <button class="tool" title="New solid"><svg><use href="#st-solid"/></svg></button>
            <button class="tool" title="Extrude"><svg><use href="#st-extr"/></svg></button>
            <button class="drop" title="More"></button>
            <span class="sep"></span>
            <button class="tool" title="Combinations"><svg><use href="#branch"/></svg></button>
            <button class="drop" title="More"></button>
            <button class="tool" title="Nodal load"><svg><use href="#ld-node"/></svg></button>
            <button class="tool" title="Member load"><svg><use href="#ld-mem"/></svg></button>
            <button class="tool" title="Line load"><svg><use href="#ld-mem"/></svg></button>
            <button class="tool" title="Surface load"><svg><use href="#ld-gen"/></svg></button>
            <button class="tool" title="Solid load"><svg><use href="#ld-solid"/></svg></button>
            <button class="drop" title="More"></button>
            <span class="sep"></span>
            <button class="tool" title="Import"><svg><use href="#dl-down"/></svg></button>
            <button class="tool" title="Export"><svg><use href="#dl-up"/></svg></button>
            <button class="tool" title="CAD import"><svg><use href="#cad"/></svg></button>
            <button class="tool" title="CAD export"><svg><use href="#cad-up"/></svg></button>
        </div>

        <main class="workspace">
            <aside class="navigator">
                <div class="pane-head">
                    <h2>Project Navigator - Data</h2>
                    <button title="Pin"><svg><use href="#pin"/></svg></button>
                    <button title="Close"><svg><use href="#x"/></svg></button>
                </div>
                <div class="tree-wrap">
                    <ul class="tree">
                        <li><i class="guide"></i><i class="branch"></i><b></b>Openings</li>
                        <li><i class="guide"></i><i class="branch"><button class="box" title="Expand"></button></i><b></b>Nodal Supports</li>
                        <li><i class="guide"></i><i class="branch"></i><b></b>Line Supports</li>
                        <li><i class="guide"></i><i class="branch"></i><b></b>Surface Supports</li>
                        <li><i class="guide"></i><i class="branch"></i><b></b>Line Hinges</li>
                        <li><i class="guide"></i><i class="branch"></i><b></b>Variable Thicknes</li>
                        <li><i class="guide"></i><i class="branch"></i><b></b>Orthotropic Surfa</li>
                        <li><i class="guide"></i><i class="branch"><button class="box opened" title="Collapse"></button></i><b></b>Cross-Sections</li>
                        <li class="sub"><i class="guide"></i><i class="guide"></i><i class="branch"></i><b></b>1: Rectangle 1</li>
                        <li class="sub marked"><i class="guide"></i><i class="guide"></i><i class="branch"></i><b></b>2: Rectangle 1</li>
                        <li class="sub"><i class="guide"></i><i class="guide"></i><i class="branch"></i><b></b>3: Rectangle 1</li>
                        <li class="sub"><i class="guide"></i><i class="guide"></i><i class="branch"></i><b></b>4: Rectangle 1</li>
                        <li class="sub"><i class="guide"></i><i class="guide"></i><i class="branch"></i><b></b>5: Rectangle 1</li>
                        <li class="sub"><i class="guide"></i><i class="guide"></i><i class="branch"></i><b></b>6: Rectangle 1</li>
                        <li class="sub"><i class="guide"></i><i class="guide"></i><i class="branch"></i><b></b>7: Rectangle 1</li>
                        <li class="sub"><i class="guide"></i><i class="guide"></i><i class="branch last"></i><b></b>8: Rectangle 1</li>
                        <li><i class="guide"></i><i class="branch"></i><b></b>Member Hinges</li>
                        <li><i class="guide"></i><i class="branch"></i><b></b>Member Eccentric</li>
                        <li><i class="guide"></i><i class="branch"></i><b></b>Member Divisions</li>
                        <li><i class="guide"></i><i class="branch"><button class="box" title="Expand"></button></i><b></b>Members</li>
                        <li><i class="guide"></i><i class="branch"></i><b></b>Ribs</li>
                        <li><i class="guide"></i><i class="branch"></i><b></b>Member Elastic Fo</li>
                        <li><i class="guide"></i><i class="branch"></i><b></b>Member Nonlinea</li>
                        <li><i class="guide"></i><i class="branch"></i><b></b>Sets of Members</li>
                        <li><i class="guide"></i><i class="branch"></i><b></b>Intersections of S</li>
                        <li><i class="guide"></i><i class="branch"></i><b></b>FE Mesh Refinem</li>
                        <li><i class="guide"></i><i class="branch"></i><b></b>Nodal Releases</li>
                        <li><i class="guide"></i><i class="branch"></i><b></b>Line Release Type</li>
                        <li><i class="guide"></i><i class="branch"></i><b></b>Line Releases</li>
                        <li><i class="guide"></i><i class="branch"></i><b></b>Surface Release T</li>
                        <li><i class="guide"></i><i class="branch"></i><b></b>Surface Releases</li>
                        <li><i class="guide"></i><i class="branch"></i><b></b>Connection of Tw</li>
                        <li><i class="guide"></i><i class="branch"></i><b></b>Joints</li>
                        <li><i class="guide"></i><i class="branch last"></i><b></b>Nodal Constraints</li>
                        <li><i class="branch"><button class="box opened" title="Collapse"></button></i><b></b>Load Cases and Com</li>
                        <li class="leaf"><i class="guide"></i><i class="branch"></i><b></b>Load Cases</li>
                        <li class="leaf"><i class="guide"></i><i class="branch"></i><b></b>Actions</li>
                    </ul>
                    <div class="vscroll">
                        <button title="Up"><svg><use href="#up"/></svg></button>
                        <span class="before-thumb"></span>
                        <span class="thumb"></span>
                        <span class="after-thumb"></span>
                        <button title="Down"><svg><use href="#down"/></svg></button>
                    </div>
                </div>
                <div class="hscroll">
                    <button title="Left"><svg><use href="#left"/></svg></button>
                    <span class="thumb"></span>
                    <button class="end" title="Right"><svg><use href="#right"/></svg></button>
                </div>
                <div class="nav-tabs">
                    <button class="active"><svg viewBox="0 0 6 6"><path d="M1 1h3v2H1z" fill="#c6b638"/><path d="M2 3v2h3" fill="none" stroke="#555"/></svg>Data</button>
                    <button><svg viewBox="0 0 6 6"><path d="M0 2h4v3H0z" fill="#4f72b8"/><path d="M2 1h4" stroke="#555"/></svg>Display</button>
                    <button><svg viewBox="0 0 6 6"><path d="M0 4l4-4v5" fill="none" stroke="#4558a8"/></svg>Views</button>
                </div>
            </aside>

            <section class="content">
                <div class="viewport">
                    <svg class="model" viewBox="147 78 1132 441" preserveAspectRatio="xMinYMin meet">
                        <!-- guidelines -->
                        <path class="guideline" d="M305.500 490v29M428.500 490v29M519.500 490v29M613.500 490v29M648.500 490v29M704.500 490v29M782.500 490v29M875.500 490v29M950.500 490v29M1031 490v29"/>
                        <path class="guideline" d="M1037 105.500h68M1037 276.500h68M1037 292.500h68M1037 311.500h68M1033 407.500h72M1031 485.500h74M1103.500 105v80M1103.500 196v84M1103.500 289v7M1103.500 305v48M1103.500 364v76M1103.500 452v34"/>
                        <path class="guideline" d="M1102 108h3M1102 274h3M1102 280h3M1102 290h3M1102 296h3M1102 309h3M1102 315h3M1102 405h3M1102 411h3M1102 483h3"/>
                        <path class="dashed" d="M958 485.500h73M1031.500 411v75"/>
                        <g class="dim">
                            <text transform="translate(1105 190) rotate(-90)">16.50</text>
                            <text transform="translate(1105 284) rotate(-90)">1.50</text>
                            <text transform="translate(1105 301) rotate(-90)">1.75</text>
                            <text transform="translate(1105 359) rotate(-90)">9.00</text>
                            <text transform="translate(1105 446) rotate(-90)">7.50</text>
                        </g>
                        <!-- supports -->
                        <path class="support" d="M297 96h17v8h-17zM511 96h17v8h-17zM640 96h17v8h-17zM773 96h17v8h-17zM1022 96h18v18h-18zM1030 268h10v17h-10zM1028 399h12v17h-12zM297 484h17v10h-17zM420 486h17v8h-17zM605 486h17v8h-17zM696 486h17v8h-17zM942 486h17v8h-17z"/>
                        <!-- slab -->
                        <path class="slab" d="M279 105h752v302A104 104 0 0 1 950 485H279z"/>
                        <path class="edge" d="M279 105v380M613.500 109v198M950.500 411v70"/>
                        <path class="opening" d="M614 311h90v174h-90z"/>
                        <path class="cross-line" d="M659 316v165M618 362h82M618 447.500h82"/>
                        <path class="dashed" d="M648.500 316v165M619 407.500h80"/>
                        <path class="support" d="M619 316h4v4h-4zM695 316h4v4h-4zM619 477h4v4h-4zM695 477h4v4h-4z"/>
                        <!-- beams -->
                        <path class="beam" d="M301 104.500h733M301 292.500h128M429 311.500h447M876 276.500h155M876 407.500h155M301 485.500h650"/>
                        <path class="beam" d="M305.500 100v390M429 104v382M520 104v208M648.500 104v208M782.500 104v208M875.500 104v382"/>
                        <path class="beam wide" d="M614 307v183M704 307v183M1032 104v304"/>
                        <path class="beam" d="M1031 405A104 104 0 0 1 949 485.500"/>
                        <g class="node">
                            <circle cx="279" cy="105" r="2"/><circle cx="279" cy="292.500" r="2"/><circle cx="279" cy="485.500" r="2"/>
                            <circle cx="659" cy="362" r="2.500"/><circle cx="659" cy="447.500" r="2.500"/>
                            <path d="M1031 100h6v8h-2v-3h-4zM299 101h5v8h-3v-4h-2zM299 481h5v8h-3v-4h-2z"/>
                        </g>
                        <path d="M305.500 472v13M165 439v18" stroke="#1c7d35"/>
                        <path d="M306 485.500h15M166 457h13M181 457h2" stroke="#8d2032"/>
                    </svg>

                    <div class="panel">
                        <div class="pane-head panel-head">
                            <h2>Panel</h2>
                            <button title="Close"><svg><use href="#x"/></svg></button>
                        </div>
                        <p class="panel-label">Member Types</p>
                        <div class="legend"><span class="swatch"></span>Beam</div>
                        <div class="panel-tools">
                            <button title="Copy settings"><svg viewBox="0 0 16 16"><path d="M2 3c0-1 5-1 5 0v9H2z" fill="#e6e6da" stroke="#333"/><path d="M6 2h7v3h-3M8 5v5" fill="none" stroke="#444" stroke-width="1.500"/><path d="M8 7h3l2 2v5H8z" fill="#fff" stroke="#444"/><path d="M9 11h3" stroke="#555"/></svg></button>
                        </div>
                        <div class="panel-tab"><svg viewBox="0 0 6 8"><path d="M0 0h6v8H0z" fill="#fff"/><path d="M1 2h4" stroke="#26407e" stroke-width="2"/><path d="M1 5h4" stroke="#8a845f" stroke-width="2"/></svg></div>
                    </div>
                </div>

                <div class="table-pane">
                    <div class="pane-head">
                        <h2>1.1 Nodes</h2>
                        <button title="Pin"><svg><use href="#pin"/></svg></button>
                        <button title="Close"><svg><use href="#x"/></svg></button>
                    </div>
                    <div class="table-tools">
                        <div class="toolbar toolbar-table">
                            <button class="tool on" title="Edit in graphic"><svg><use href="#t-check"/></svg></button>
                            <button class="tool" title="Input tables"><svg><use href="#t-plus"/></svg></button>
                            <button class="tool" title="Load tables"><svg><use href="#t-down"/></svg></button>
                            <button class="tool" title="Result tables"><svg><use href="#t-res"/></svg></button>
                            <button class="tool" title="Dynamic tables"><svg><use href="#t-wave"/></svg></button>
                            <span class="sep"></span>
                            <button class="tool" title="Previous table"><svg><use href="#t-left"/></svg></button>
                            <button class="tool" title="Next table"><svg><use href="#t-right"/></svg></button>
                            <span class="sep"></span>
                            <button class="tool on" title="Select in graphic"><svg><use href="#t-hook"/></svg></button>
                            <button class="tool on" title="Select in table"><svg><use href="#t-hook2"/></svg></button>
                            <button class="tool" title="Refresh"><svg><use href="#t-sync"/></svg></button>
                            <span class="sep"></span>
                            <button class="tool" title="Insert"><svg><use href="#t-blue"/></svg></button>
                            <button class="tool" title="Fill"><svg><use href="#t-blue2"/></svg></button>
                            <button class="tool" title="Relax"><svg><use href="#t-blue3"/></svg></button>
                            <span class="sep"></span>
                            <button class="tool" title="Clear"><svg><use href="#t-x"/></svg></button>
                            <span class="sep"></span>
                            <button class="tool" title="Delete row"><svg><use href="#t-delrow"/></svg></button>
                            <button class="tool" title="Insert row"><svg><use href="#t-insrow"/></svg></button>
                            <button class="tool" title="Remove row"><svg><use href="#t-outrow"/></svg></button>
                            <span class="sep"></span>
                            <button class="tool" title="Colors"><svg><use href="#t-yellow"/></svg></button>
                            <button class="tool" title="Bands"><svg><use href="#t-bands"/></svg></button>
                            <span class="sep"></span>
                            <button class="tool" title="Edit"><svg><use href="#t-edit"/></svg></button>
                            <span class="sep"></span>
                            <button class="tool" title="Properties"><svg><use href="#t-prop"/></svg></button>
                            <button class="tool" title="Check"><svg><use href="#glasses"/></svg></button>
                            <button class="tool" title="Excel"><svg><use href="#t-xls"/></svg></button>
                            <button class="tool" title="Calculator"><svg><use href="#t-calc"/></svg></button>
                            <span class="sep"></span>
                            <button class="tool" title="Parameters"><svg><use href="#t-abl"/></svg></button>
                            <button class="tool" title="Formula"><svg><use href="#t-fx"/></svg></button>
                            <button class="tool" title="Delete formula"><svg><use href="#t-xfx"/></svg></button>
                            <span class="sep"></span>
                            <button class="tool" title="Lock"><svg><use href="#t-lock"/></svg></button>
                        </div>
                    </div>
                    <div class="table-body">
                        <table>
                            <colgroup>
                                <col class="c-no"><col class="c-a"><col class="c-b"><col class="c-c"><col class="c-d"><col class="c-e"><col class="c-f"><col>
                            </colgroup>
                            <thead>
                                <tr class="letters">
                                    <th rowspan="3" class="no">Node<br>No.</th>
                                    <th class="current">A</th><th>B</th><th>C</th><th>D</th><th>E</th><th>F</th><th>G</th>
                                </tr>
                                <tr class="names">
                                    <th></th><th>Reference</th><th>Coordinate</th><th colspan="3">Node Coordinates</th><th></th>
                                </tr>
                                <tr class="names">
                                    <th>Node Type</th><th>Node</th><th>System</th><th class="open">X [ft]</th><th class="open">Y [ft]</th><th>Z [ft]</th><th>Comment</th>
                                </tr>
                            </thead>
                            <tbody>
                                <tr><th class="current">41</th><td class="cell-active">Standard</td><td class="mid">0</td><td>Cartesian</td><td class="num">28.75</td><td class="num">11.50</td><td class="num">6.00</td><td></td></tr>
                                <tr><th>42</th><td>Standard</td><td class="mid">0</td><td>Cartesian</td><td class="num">28.75</td><td class="num">0.00</td><td class="num">11.50</td><td></td></tr>
                                <tr><th>43</th><td>Standard</td><td class="mid">0</td><td>Cartesian</td><td class="num">37.25</td><td class="num">0.00</td><td class="num">11.50</td><td></td></tr>
                            </tbody>
                        </table>
                        <div class="vscroll">
                            <button title="Up"><svg><use href="#up"/></svg></button>
                            <span class="before-thumb"></span>
                            <span class="thumb"></span>
                            <span class="after-thumb"></span>
                            <button title="Down"><svg><use href="#down"/></svg></button>
                        </div>
                    </div>
                    <div class="sheet-bar">
                        <div class="sheet-tabs">
                            <button class="active">Nodes</button>
                            <button>Lines</button>
                            <button>Materials</button>
                            <button>Surfaces</button>
                            <button>Solids</button>
                            <button>Openings</button>
                            <button>Nodal Supports</button>
                            <button>Line Supports</button>
                            <button>Surface Supports</button>
                            <button>Line Hinges</button>
                            <button>Cross-Sections</button>
                            <button>Member Hinges</button>
                            <button>Member Eccentricities</button>
                            <button>Member Divisions</button>
                            <button>Members</button>
                            <button>Member Elastic Foundations</button>
                            <button>Member Nonlinearities</button>
                            <button>Sets of Members</button>
                        </div>
                        <div class="sheet-nav">
                            <button title="First"><svg viewBox="0 0 8 8"><path d="M3 2v3M5 2v3" stroke="#888"/></svg></button>
                            <button title="Previous"><svg viewBox="0 0 8 8"><path d="M5 1v5L2 3.500z" fill="#999"/></svg></button>
                            <button title="Next"><svg viewBox="0 0 8 8"><path d="M2 1v6l4-3z" fill="#111"/></svg></button>
                            <button title="Last"><svg viewBox="0 0 8 8"><path d="M3 2v3M5 2v3" stroke="#333"/></svg></button>
                        </div>
                    </div>
                </div>
            </section>
        </main>

        <footer class="statusbar">
            <span class="status-text">Selects the current loads case, load combination, result combination, or module case.</span>
            <div class="modes">
                <button>SNAP</button>
                <button class="lit">GRID</button>
                <button class="cartes">CARTES</button>
                <button>OSNAP</button>
                <button>GLINES</button>
                <button>DXF</button>
            </div>
            <i></i><i></i><i></i><i></i>
        </footer>

        <div class="taskbar">
            <div class="task-fixed">
                <button title="Start"><svg viewBox="0 0 20 20"><path d="M3 5l6-1v5.500H3zM10 4l7-1v6.500h-7zM3 10.500h6V16l-6-1zM10 10.500h7V17l-7-1z" fill="#fff"/></svg></button>
                <button title="Search"><svg viewBox="0 0 20 20"><circle cx="12" cy="8" r="4.500" fill="none" stroke="#fff"/><path d="M9 11l-6 6" stroke="#fff"/></svg></button>
                <button title="Task view"><svg viewBox="0 0 20 20"><path d="M4.500 4v12M12.500 4v12M4 7h9M4 13h9M16.500 4v2M16.500 8v8" fill="none" stroke="#fff"/></svg></button>
            </div>
            <button title="Edge"><svg viewBox="0 0 20 20"><path d="M1 9c2-9 17-10 17 3H7c0 5 6 5 10 3v3c-8 4-15-1-12-7 1-2 2-3 4-4-3 0-6 0-8 2zM7 9h7c0-4-6-4-7 0z" fill="#2480d8"/></svg></button>
            <button class="running" title="File Explorer"><svg viewBox="0 0 20 20"><path d="M1 3h6l2 2h10v13H1z" fill="#f7da7c"/><path d="M1 8h18v9H1z" fill="#fbe9a5"/><path d="M3 18v-7h14v7h-3v-4H6v4z" fill="#4aa8dc"/></svg></button>
            <button title="Store"><svg viewBox="0 0 20 20"><path d="M0 5h20v13H0z" fill="#fff"/><path d="M6 7V4c0-4 8-4 8 0v3" fill="none" stroke="#fff" stroke-width="1.500"/><path d="M6 8h4v3.500H6z" fill="#e35629"/><path d="M10.500 8h4v3.500h-4z" fill="#7db730"/><path d="M6 12.500h4V16H6z" fill="#2f9bdc"/><path d="M10.500 12.500h4V16h-4z" fill="#eeb72b"/></svg></button>
            <button title="Mail"><svg viewBox="0 0 20 20"><path d="M0 7l10-5 10 5v10H0z" fill="#fff"/><path d="M2 7h16l-8 4 2 3z" fill="#42090b"/></svg></button>
            <button title="Snipping Tool"><svg viewBox="0 0 20 20"><ellipse cx="9" cy="6" rx="8" ry="4.500" fill="#eceff3" stroke="#a2a6ac"/><path d="M3 7l11-3" stroke="#b5b9bf"/><path d="M9 9l4 3M14 7l-1 5" stroke="#c8ccd2" stroke-width="1.500"/><ellipse cx="12" cy="15" rx="1.500" ry="3" fill="none" stroke="#5b91cc" stroke-width="1.500"/><ellipse cx="16" cy="13" rx="2.500" ry="2" fill="none" stroke="#5b91cc" stroke-width="1.500"/></svg></button>
            <button class="running" title="Chrome"><svg viewBox="0 0 20 20"><circle cx="10" cy="10" r="9" fill="#4bae55"/><path d="M10 1a9 9 0 0 1 8 5h-8l-3 6-5-7c2-3 5-4 8-4z" fill="#e14b3e"/><path d="M18 6a9 9 0 0 1-8 13l4-7V6z" fill="#f9d147"/><circle cx="10" cy="10" r="4.500" fill="#fff"/><circle cx="10" cy="10" r="3.500" fill="#4687ed"/></svg></button>
            <button class="running" title="AutoCAD"><svg viewBox="0 0 20 20"><path d="M0 0h20v20H0z" fill="#f3efef"/><path d="M5 16l5-12 2 12M7 12h5" fill="none" stroke="#b5202a" stroke-width="3"/></svg></button>
            <button class="running current" title="RFEM"><svg><use href="#rfem"/></svg></button>
            <button class="running" title="Screen Recorder"><svg viewBox="0 0 20 20"><path d="M0 0h20v20H0z" fill="#e2702a"/><circle cx="10" cy="10" r="3.500" fill="#fff"/><path d="M4 8V4h4M12 4h4v4M16 12v4h-4M8 16H4v-4" fill="none" stroke="#fbd9c0"/></svg></button>
            <div class="tray">
                <svg viewBox="0 0 14 14"><circle cx="5" cy="6" r="2" fill="none" stroke="#fff"/><path d="M1 13c0-6 7-6 7 0M8 6c1-2 5-2 5 2" fill="none" stroke="#fff"/><circle cx="10" cy="3" r="2" fill="none" stroke="#fff"/></svg>
                <svg class="caret" viewBox="0 0 14 14"><path d="M2 9l5-5 5 5" fill="none" stroke="#fff"/></svg>
                <svg viewBox="0 0 14 14"><path d="M4 5h9v5H4z" fill="#ddd" stroke="#fff"/><path d="M1 2v3h3V2" fill="none" stroke="#fff"/></svg>
                <svg viewBox="0 0 14 14"><path d="M3 3h10v7H3zM5 12h6M1 1v5M1 3h3" fill="none" stroke="#fff"/></svg>
                <svg viewBox="0 0 14 14"><path d="M1 5h2l3-2v8L3 9H1zM8 5v4M10 4v6M12 3v8" fill="none" stroke="#fff"/></svg>
                <div class="clock">1:44 AM<br>10/16/2018</div>
                <button class="notice" title="Notifications"><svg viewBox="0 0 16 16"><path d="M1 1h14v10H8l-3 3v-3H1z" fill="#fff"/><path d="M3 4h10M3 6h10M3 8h7" stroke="#42090b"/></svg><span>1</span></button>
            </div>
        </div>
    </div>
</body>
</html>
```
FILE: styles.css
```css
* {
    margin: 0;
    padding: 0;
    box-sizing: border-box;
}

body {
    font-family: Roboto, "Open Sans", sans-serif;
    font-size: 10px;
    color: #222;
    background: #cfd3dd;
    overflow: hidden;
}

button, select {
    font: inherit;
    color: inherit;
    background: none;
    border: none;
}

h1, h2 {
    font-size: 10px;
    font-weight: normal;
}

svg {
    display: block;
}

ul {
    list-style: none;
}

.sprite {
    display: none;
}

.app {
    height: 100vh;
    display: flex;
    flex-direction: column;
}

/* title and menu */
.titlebar {
    flex: none;
    height: 19px;
    display: flex;
    align-items: center;
    padding-right: 2px;
    background: #c8433c;
    border-bottom: 1px solid #d98c88;
    color: #fff;
}

.app-icon {
    width: 14px;
    height: 13px;
    margin-right: 2px;
}

.win-buttons {
    display: flex;
    margin-left: auto;
}

.win-buttons button {
    width: 39px;
    display: flex;
    justify-content: center;
}

.win-buttons svg {
    width: 8px;
    height: 8px;
}

.menubar {
    flex: none;
    height: 18px;
    display: flex;
    align-items: center;
    gap: 5px;
    padding: 0 3px;
    background: #d0d4de;
    color: #3a3e48;
}

.menu-icon {
    width: 14px;
    height: 12px;
}

.mdi-buttons {
    display: flex;
    gap: 7px;
    margin-left: auto;
}

.mdi-buttons svg {
    width: 8px;
    height: 8px;
}

/* toolbars */
.toolbar {
    flex: none;
    height: 20px;
    display: flex;
    align-items: center;
    padding: 0 3px;
    background: linear-gradient(#f1f4fb, #e2e6f1 60%, #cfd4e0);
}

.toolbar-main {
    width: 1062px;
}

.toolbar-edit {
    width: 1069px;
}

.toolbar-table {
    width: 541px;
    padding: 0 1px;
    background: none;
}

.tool {
    flex: 1 1 18px;
    min-width: 0;
    height: 18px;
    display: flex;
    align-items: center;
    justify-content: center;
}

.tool svg {
    flex: none;
    width: 16px;
    height: 16px;
}

.tool.on {
    background: linear-gradient(#fde3b0, #fbc66b);
    border: 1px solid #e2b66a;
}

.sep {
    flex: none;
    width: 3px;
    height: 12px;
    border-left: 1px solid #c5cad6;
}

.drop {
    flex: none;
    width: 9px;
    height: 16px;
    display: flex;
    align-items: center;
    justify-content: center;
}

.drop::before {
    content: "";
    border: 2px solid transparent;
    border-top: 3px solid #5a5f6b;
    border-bottom: none;
}

.combo {
    position: relative;
    flex: none;
    width: 72px;
}

.combo select {
    appearance: none;
    display: block;
    width: 100%;
    height: 12px;
    background: #f3f3f3;
    border: 1px solid #cfd2da;
}

.combo::after {
    content: "";
    position: absolute;
    right: 5px;
    top: 5px;
    border: 2px solid transparent;
    border-top: 3px solid #888;
    border-bottom: none;
}

/* panes */
.workspace {
    flex: 1;
    min-height: 0;
    display: flex;
    border-top: 1px solid #aab0bd;
}

.pane-head {
    flex: none;
    height: 16px;
    display: flex;
    align-items: center;
    padding: 0 2px 0 1px;
    background: #bbc2ce;
    color: #3c424d;
}

.pane-head h2 {
    flex: 1;
}

.pane-head button {
    padding: 1px;
}

.pane-head svg {
    width: 8px;
    height: 8px;
}

.navigator {
    flex: none;
    width: 144px;
    display: flex;
    flex-direction: column;
}

.navigator .pane-head {
    height: 17px;
}

.tree-wrap {
    flex: 1;
    min-height: 0;
    display: flex;
    margin-left: 2px;
}

.tree {
    flex: 1;
    min-width: 0;
    display: flex;
    flex-direction: column;
    overflow: hidden;
    background: #fbfbf3;
}

.tree li {
    flex: 1 1 0;
    min-height: 0;
    display: flex;
    align-items: center;
    padding-left: 17px;
    line-height: 14px;
    white-space: nowrap;
    color: #1c1c1c;
}

.tree .marked {
    color: #4547a5;
}

.guide {
    flex: none;
    align-self: stretch;
    width: 14px;
    border-left: 1px dotted #b4b4b4;
}

.guide + .guide {
    width: 15px;
}

.branch {
    flex: none;
    align-self: stretch;
    position: relative;
    width: 13px;
    border-left: 1px dotted #b4b4b4;
}

.branch::after {
    content: "";
    display: block;
    height: 50%;
    border-bottom: 1px dotted #b4b4b4;
}

.branch.last {
    border-left-color: transparent;
}

.branch.last::after {
    border-left: 1px dotted #b4b4b4;
    margin-left: -1px;
}

.box {
    position: absolute;
    left: -3px;
    top: 4px;
    width: 6px;
    height: 6px;
    background: linear-gradient(#555, #555) center / 2px 2px no-repeat #fff;
    border: 1px solid #b0b4be;
}

.box.opened {
    background-size: 2px 1px;
}

.tree b {
    flex: none;
    width: 5px;
    height: 4px;
    margin-right: 2px;
    background: #c4b84a;
    border: 1px solid #a09a55;
    border-top-color: #6c6a3c;
}

.tree .sub b {
    width: 2px;
    height: 4px;
    margin-right: 5px;
    background: #777;
    border: none;
}

.tree .leaf b {
    background: none;
    border-color: transparent #888 #888 transparent;
}

.vscroll {
    flex: none;
    width: 14px;
    display: flex;
    flex-direction: column;
    background: #f0f0f0;
}

.vscroll button, .hscroll button {
    flex: none;
    width: 14px;
    height: 14px;
    display: flex;
    align-items: center;
    justify-content: center;
}

.vscroll svg, .hscroll svg {
    width: 8px;
    height: 8px;
}

.thumb {
    background: #cdcdcd;
}

.vscroll .before-thumb {
    flex: 81;
}

.vscroll .thumb {
    flex: 335;
}

.vscroll .after-thumb {
    flex: 99;
}

.hscroll {
    flex: none;
    height: 14px;
    display: flex;
    margin-left: 2px;
    padding-right: 14px;
    background: #f0f0f0;
}

.hscroll .thumb {
    width: 32px;
}

.hscroll .end {
    margin-left: auto;
}

.nav-tabs {
    flex: none;
    height: 17px;
    display: flex;
    align-items: center;
    gap: 4px;
    margin-left: 2px;
    color: #3c424d;
}

.nav-tabs button {
    height: 16px;
    display: flex;
    align-items: center;
}

.nav-tabs svg {
    width: 6px;
    height: 6px;
}

.nav-tabs .active {
    background: #eef0f5;
}

.content {
    flex: 1;
    min-width: 0;
    display: flex;
    flex-direction: column;
    margin: 0 1px 0 3px;
}

.viewport {
    flex: 1;
    min-height: 0;
    position: relative;
    overflow: hidden;
    background: #000;
}

.model {
    width: 100%;
    height: 100%;
}

.slab {
    fill: #d4d4d4;
}

.opening {
    fill: #000;
}

.beam {
    fill: none;
    stroke: #7dbbff;
    stroke-width: 9;
}

.beam.wide {
    stroke-width: 10;
}

.support {
    fill: #0f941c;
}

.node {
    fill: #cc1212;
}

.guideline {
    fill: none;
    stroke: #8a8a8a;
}

.edge {
    fill: none;
    stroke: #f2f2f2;
}

.cross-line {
    fill: none;
    stroke: #b0b0b0;
}

.dashed {
    fill: none;
    stroke: #4c8a5f;
    stroke-dasharray: 4 1 1 1;
}

.dim {
    font-family: "Liberation Sans", Arial, sans-serif;
    font-size: 4px;
    text-anchor: middle;
    fill: #ccc;
}

/* docked panel over the work window */
.panel {
    position: absolute;
    top: 0;
    right: 0;
    width: 138px;
    height: 424px;
    display: flex;
    flex-direction: column;
    padding: 2px 1px 1px 2px;
    background: #f0f0f0;
    border-left: 1px solid #d5d8df;
}

.panel-head {
    height: 18px;
}

.panel-head h2 {
    font-weight: bold;
}

.panel-label {
    height: 19px;
    padding: 7px 3px;
    font-size: 4px;
    line-height: 6px;
}

.legend {
    flex: 1;
    display: flex;
    align-items: flex-start;
    gap: 2px;
    margin: 0 4px 0 3px;
    padding: 1px 2px;
    background: #fff;
    border: 1px solid #d8d8d8;
    line-height: 16px;
    color: #000;
}

.swatch {
    width: 13px;
    height: 12px;
    background: #6699f8;
}

.panel-tools {
    padding: 0 4px 3px;
}

.panel-tools button {
    padding: 1px 3px;
    background: #e1e1e1;
    border: 1px solid #c9c9c9;
}

.panel-tools svg {
    width: 16px;
    height: 15px;
}

.panel-tab {
    height: 17px;
    padding: 4px 2px;
    background: #d0d4de;
    border-top: 1px solid #9ba1ae;
}

.panel-tab svg {
    width: 6px;
    height: 8px;
}

/* table pane */
.table-pane {
    flex: none;
    padding-top: 2px;
    background: #f0f0f0;
    font-family: "Liberation Sans", Arial, sans-serif;
    border-top: 1px solid #cfd3dd;
}

.table-pane .pane-head {
    font-family: Roboto, "Open Sans", sans-serif;
}

.table-tools {
    background: linear-gradient(#f1f4fb, #e2e6f1 60%, #cfd4e0);
    border-bottom: 1px solid #b5b9c2;
}

.table-body {
    display: flex;
}

table {
    flex: 1;
    border-collapse: separate;
    border-spacing: 0;
    table-layout: fixed;
    width: 100%;
    line-height: 12px;
    color: #111;
}

.c-no {
    width: 38px;
}

.c-a {
    width: 73px;
}

.c-b {
    width: 62px;
}

.c-c {
    width: 78px;
}

.c-d, .c-e, .c-f {
    width: 67px;
}

th, td {
    height: 13px;
    border-right: 1px solid #c3c3c3;
    border-bottom: 1px solid #c9c9c9;
    font-weight: normal;
    overflow: hidden;
    white-space: nowrap;
}

th {
    text-align: center;
}

.letters th {
    height: 12px;
    background: #e1e1e1;
    border-color: #9c9c9c;
    line-height: 11px;
}

.letters .no {
    vertical-align: bottom;
    background: #e6e6e6;
    border-bottom-color: #b0b0b0;
    line-height: 12px;
}

.names th {
    border-bottom: none;
    background: #f0f0f0;
}

.names .open {
    border-right-color: transparent;
}

.names + .names th {
    border-bottom: 1px solid #c9c9c9;
}

tbody th {
    background: #e4e4e4;
    border-color: #b0b0b0;
}

th.current, .letters th.current {
    background: #0a78d6;
    color: #fff;
}

td {
    padding: 0 3px;
    background: #fff;
}

.cell-active {
    outline: 1px solid #999;
    outline-offset: -1px;
}

.mid {
    text-align: center;
}

.num {
    text-align: right;
}

.table-body .vscroll .before-thumb {
    flex: 14;
}

.table-body .vscroll .thumb {
    flex: 14;
}

.table-body .vscroll .after-thumb {
    flex: 22;
}

.sheet-bar {
    display: flex;
    justify-content: space-between;
    padding: 10px 0 11px;
    font-size: 9px;
    line-height: 11px;
    white-space: nowrap;
}

.sheet-tabs {
    flex: 0 0 1075px;
    display: flex;
}

.sheet-tabs button {
    flex: 1 0 auto;
    padding: 0 1px;
    border: 1px solid #a8a8a8;
    border-left: none;
}

.sheet-tabs .active {
    border-color: transparent #a8a8a8 transparent transparent;
}

.sheet-nav {
    display: flex;
}

.sheet-nav button {
    padding: 0 1px;
    border: 1px solid #c4c4c4;
    border-left: none;
}

.sheet-nav svg {
    width: 8px;
    height: 8px;
}

/* status and task bars */
.statusbar {
    flex: none;
    height: 17px;
    display: flex;
    align-items: center;
    padding-left: 2px;
    border-top: 2px solid #dfe2e8;
    background: linear-gradient(#a5abb7, #b9bec9);
    font-family: "Liberation Sans", Arial, sans-serif;
    font-size: 9px;
    color: #222;
}

.status-text {
    flex: 1;
}

.modes {
    display: flex;
    margin-right: 50px;
}

.modes button {
    height: 14px;
    padding: 0 1px;
    border: 1px solid #8f96a3;
    border-top-color: #c9cdd6;
    border-left: none;
}

.modes .lit {
    background: #c6cad3;
}

.modes .cartes {
    padding-left: 4px;
}

.statusbar i {
    width: 26px;
    height: 14px;
    border-left: 1px solid #9ba1ad;
}

.taskbar {
    flex: none;
    height: 33px;
    display: flex;
    background: #43090b;
    color: #fff;
}

.taskbar > button {
    width: 41px;
    display: flex;
    align-items: center;
    justify-content: center;
}

.task-fixed {
    display: flex;
    margin-right: 3px;
}

.task-fixed button {
    width: 40px;
    display: flex;
    align-items: center;
    justify-content: center;
}

.taskbar > button svg {
    width: 20px;
    height: 20px;
}

.task-fixed svg {
    width: 18px;
    height: 18px;
}

.running {
    background: linear-gradient(#f0aaa6, #f0aaa6) center bottom / 34px 2px no-repeat;
}

.running.current {
    background: linear-gradient(#f0aaa6, #f0aaa6) center bottom / 41px 2px no-repeat #8f1b1b;
}

.tray {
    display: flex;
    align-items: center;
    gap: 6px;
    margin-left: auto;
    padding-right: 6px;
    border-right: 1px solid #7d5051;
    margin-right: 3px;
}

.tray > svg {
    width: 14px;
    height: 14px;
}

.tray .caret {
    margin-left: 10px;
}

.clock {
    width: 56px;
    text-align: center;
    line-height: 15px;
}

.notice {
    position: relative;
    width: 26px;
}

.notice svg {
    width: 16px;
    height: 16px;
}

.notice span {
    position: absolute;
    left: 9px;
    top: 6px;
    width: 12px;
    height: 12px;
    border-radius: 50%;
    background: #a3282c;
    font-size: 9px;
    line-height: 12px;
}
```
